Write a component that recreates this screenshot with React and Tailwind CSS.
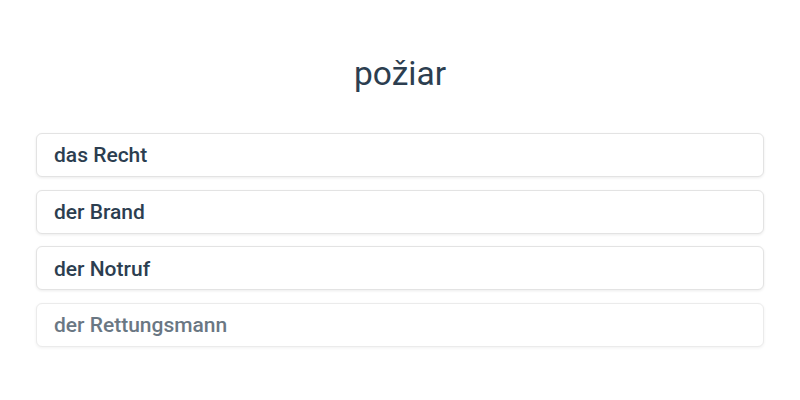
import React from 'react';

const options = [
  { word: 'das Recht', faded: false },
  { word: 'der Brand', faded: false },
  { word: 'der Notruf', faded: false },
  { word: 'der Rettungsmann', faded: true },
];

const App = () => {
  return (
    <div className="min-h-[400px] w-[800px] bg-white px-9 pt-[53px] font-['Roboto',sans-serif]">
      <h1 className="text-center text-[33.5px] leading-[42px] text-[#2c3e50]">požiar</h1>

      <div className="mt-[38px] flex flex-col gap-[12.7px]">
        {options.map((o) => (
          <div
            key={o.word}
            className={`flex h-[44px] items-center rounded-md border border-[#e3e3e3] bg-white px-[17px] pt-[2px] shadow-[0_1px_3px_rgba(0,0,0,0.08)] ${o.faded ? 'opacity-70' : ''}`}
          >
            <span className="text-[21px] font-medium text-[#2c3e50]">{o.word}</span>
          </div>
        ))}
      </div>
    </div>
  );
};

export default App;
